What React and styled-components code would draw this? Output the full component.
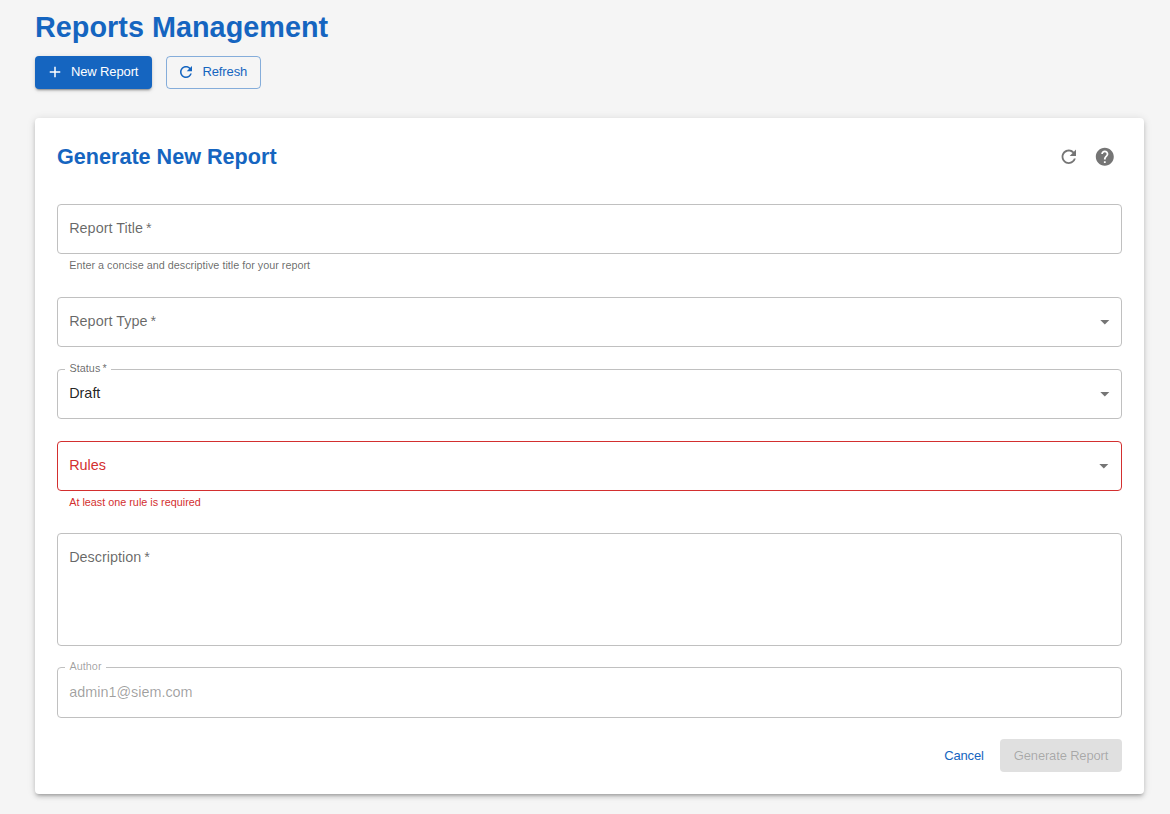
import React from "react";
import styled, { createGlobalStyle, css } from "styled-components";

const GlobalStyle = createGlobalStyle`
  *, *::before, *::after { box-sizing: border-box; }
  body {
    margin: 0;
    min-height: 814px;
    background: #f5f5f5;
    font-family: "Liberation Sans", Arial, sans-serif;
    color: rgba(0, 0, 0, 0.87);
  }
`;

const Page = styled.main`
  padding: 9px 26px 20px 35px;
`;

const PageTitle = styled.h1`
  margin: 0;
  font-size: 28.8px;
  line-height: 36px;
  font-weight: 700;
  letter-spacing: 0.02px;
  color: #1565c0;
`;

const Toolbar = styled.div`
  display: flex;
  gap: 14px;
  margin-top: 11px;
`;

const variants = {
  contained: css`
    width: 117px;
    padding: 0 0 1px 13px;
    color: #fff;
    background: #1565c0;
    box-shadow: 0 3px 1px -2px rgba(0, 0, 0, 0.2), 0 2px 2px 0 rgba(0, 0, 0, 0.14),
      0 1px 5px 0 rgba(0, 0, 0, 0.12);
  `,
  outlined: css`
    width: 95px;
    padding: 0 0 1px 12px;
    color: #1565c0;
    border: 1px solid rgba(21, 101, 192, 0.5);
  `,
  text: css`
    width: 58px;
    justify-content: center;
    color: #1565c0;
  `,
  disabled: css`
    width: 122px;
    justify-content: center;
    letter-spacing: -0.17px;
    color: rgba(0, 0, 0, 0.26);
    background: #e0e0e0;
  `,
};

const Button = styled.button`
  display: flex;
  align-items: center;
  height: 33px;
  padding: 0;
  border: 0;
  border-radius: 4px;
  background: transparent;
  font-family: inherit;
  font-size: 13px;
  line-height: 22px;
  letter-spacing: -0.13px;
  white-space: nowrap;
  ${(p) => variants[p.$variant]}
`;

const Icon = styled.svg`
  display: block;
  flex: none;
  width: ${(p) => p.$size || 21.6}px;
  height: ${(p) => p.$size || 21.6}px;
  fill: currentColor;
`;

const StartIcon = styled(Icon)`
  margin: 0 ${(p) => p.$after}px 0 -2px;
`;

const Card = styled.section`
  margin-top: 29px;
  height: 676px;
  padding: 22px;
  border-radius: 4px;
  background: #fff;
  box-shadow: 0 3px 3px -2px rgba(0, 0, 0, 0.2), 0 3px 4px 0 rgba(0, 0, 0, 0.14),
    0 1px 8px 0 rgba(0, 0, 0, 0.12);
`;

const CardHeader = styled.header`
  display: flex;
  align-items: center;
  justify-content: space-between;
  height: 34px;
`;

const CardTitle = styled.h2`
  margin: 0;
  font-size: 21.6px;
  line-height: 28px;
  font-weight: 700;
  color: #1565c0;
`;

const HeaderActions = styled.div`
  display: flex;
  gap: 14.4px;
  padding-right: 6.5px;
  color: #757575;
`;

const Form = styled.form`
  display: flex;
  flex-direction: column;
  margin-top: 30px;
`;

const Field = styled.div`
  margin-bottom: ${(p) => p.$gap}px;
`;

const controlColor = (p) => {
  if (p.$error) return "#d32f2f";
  if (p.$disabled) return "rgba(0, 0, 0, 0.38)";
  return p.$filled ? "rgba(0, 0, 0, 0.87)" : "rgba(0, 0, 0, 0.6)";
};

const Control = styled.div`
  position: relative;
  display: flex;
  align-items: ${(p) => (p.$multiline ? "flex-start" : "center")};
  justify-content: space-between;
  height: ${(p) => p.$height || 50}px;
  padding: ${(p) => (p.$multiline ? "13px 5px 0 11.2px" : "0 5px 2px 11.2px")};
  border: 1px solid ${(p) => (p.$error ? "#d32f2f" : "#c0c0c0")};
  border-radius: 4px;
  font-size: 14.4px;
  line-height: 20px;
  letter-spacing: ${(p) => (p.$filled || p.$disabled ? "0" : "0.02px")};
  color: ${controlColor};
`;

const NotchLabel = styled.span`
  position: absolute;
  top: -10px;
  left: 7px;
  padding: 0 4.5px;
  background: #fff;
  font-size: 10.8px;
  line-height: 16px;
  letter-spacing: 0.04px;
  color: ${(p) => (p.$disabled ? "rgba(0, 0, 0, 0.38)" : "rgba(0, 0, 0, 0.6)")};
`;

const Asterisk = styled.span`
  margin-left: 0.2em;
`;

const Arrow = styled(Icon)`
  color: #757575;
  margin-top: 2px;
  margin-right: ${(p) => (p.$shift ? 1 : 0)}px;
`;

const Helper = styled.p`
  margin: 2px 0 1px 12.2px;
  font-size: 10.8px;
  line-height: 18px;
  letter-spacing: 0.005px;
  color: ${(p) => (p.$error ? "#d32f2f" : "rgba(0, 0, 0, 0.6)")};
`;

const Actions = styled.div`
  display: flex;
  justify-content: flex-end;
  gap: 7px;
`;

const REFRESH =
  "M17.65 6.35C16.2 4.9 14.21 4 12 4c-4.42 0-7.99 3.58-7.99 8s3.57 8 7.99 8c3.73 0 6.84-2.55 7.73-6h-2.08c-.82 2.33-3.04 4-5.65 4-3.31 0-6-2.69-6-6s2.69-6 6-6c1.66 0 3.14.69 4.22 1.78L13 11h7V4z";
const ADD = "M19 13h-6v6h-2v-6H5v-2h6V5h2v6h6z";
const HELP =
  "M12 2C6.48 2 2 6.48 2 12s4.48 10 10 10 10-4.48 10-10S17.52 2 12 2m1 17h-2v-2h2zm2.07-7.75-.9.92C13.45 12.9 13 13.5 13 15h-2v-.5c0-1.1.45-2.1 1.17-2.83l1.24-1.26c.37-.36.59-.86.59-1.41 0-1.1-.9-2-2-2s-2 .9-2 2H8c0-2.21 1.79-4 4-4s4 1.79 4 4c0 .88-.36 1.68-.93 2.25";

const DropArrow = ({ shift }) => (
  <Arrow viewBox="0 0 24 24" $shift={shift}>
    <path d="M7 10l5 5 5-5z" />
  </Arrow>
);

export default function App() {
  return (
    <>
      <GlobalStyle />
      <Page>
        <PageTitle>Reports Management</PageTitle>
        <Toolbar>
          <Button $variant="contained">
            <StartIcon viewBox="0 0 24 24" $size={18} $after={7}><path d={ADD} /></StartIcon>
            New Report
          </Button>
          <Button $variant="outlined">
            <StartIcon viewBox="0 0 24 24" $size={18} $after={7.5}><path d={REFRESH} /></StartIcon>
            Refresh
          </Button>
        </Toolbar>
        <Card>
          <CardHeader>
            <CardTitle>Generate New Report</CardTitle>
            <HeaderActions>
              <Icon viewBox="0 0 24 24"><path d={REFRESH} /></Icon>
              <Icon viewBox="0 0 24 24"><path d={HELP} /></Icon>
            </HeaderActions>
          </CardHeader>
          <Form>
            <Field $gap={22}>
              <Control><span>Report Title<Asterisk>*</Asterisk></span></Control>
              <Helper>Enter a concise and descriptive title for your report</Helper>
            </Field>
            <Field $gap={22}>
              <Control><span>Report Type<Asterisk>*</Asterisk></span><DropArrow /></Control>
            </Field>
            <Field $gap={22}>
              <Control $filled>
                <NotchLabel>Status<Asterisk>*</Asterisk></NotchLabel>
                <span>Draft</span>
                <DropArrow />
              </Control>
            </Field>
            <Field $gap={21}>
              <Control $error><span>Rules</span><DropArrow shift /></Control>
              <Helper $error>At least one rule is required</Helper>
            </Field>
            <Field $gap={21}>
              <Control $multiline $height={113}><span>Description<Asterisk>*</Asterisk></span></Control>
            </Field>
            <Field $gap={21}>
              <Control $disabled $height={51}>
                <NotchLabel $disabled>Author</NotchLabel>
                <span>admin1@siem.com</span>
              </Control>
            </Field>
            <Actions>
              <Button type="button" $variant="text">Cancel</Button>
              <Button type="button" $variant="disabled" disabled>Generate Report</Button>
            </Actions>
          </Form>
        </Card>
      </Page>
    </>
  );
}
